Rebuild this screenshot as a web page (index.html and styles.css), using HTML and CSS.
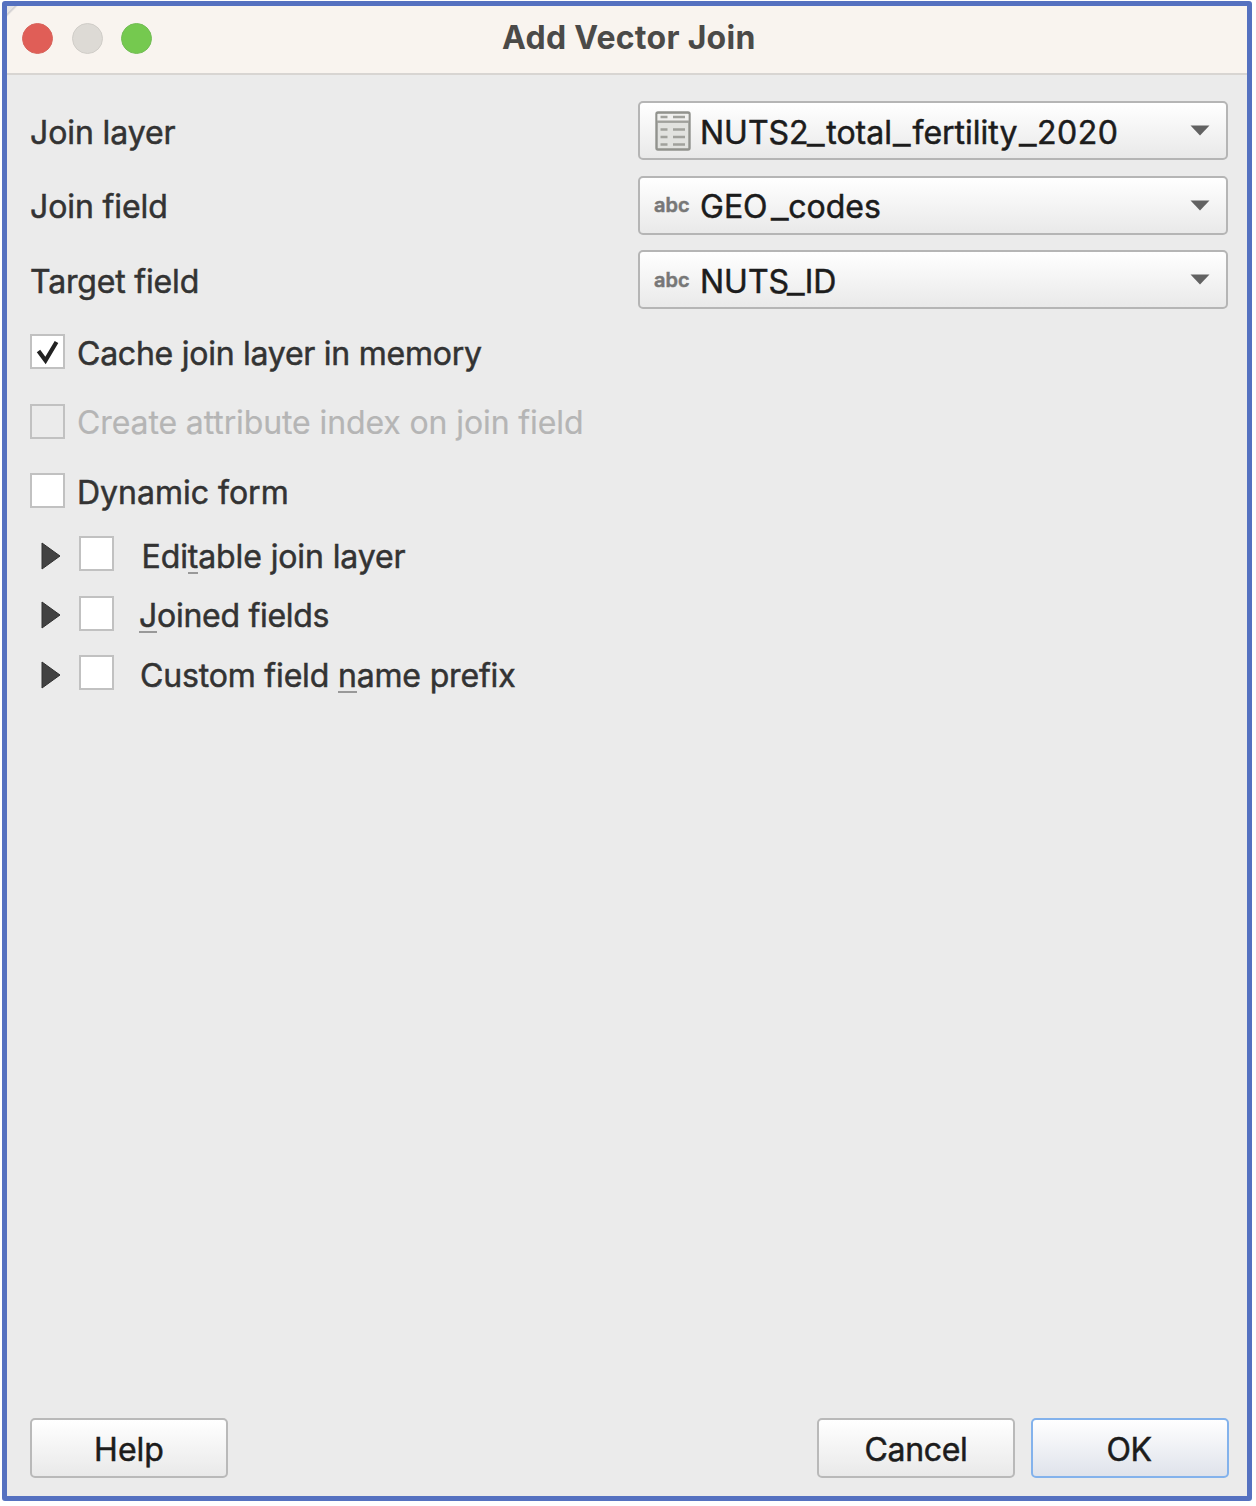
FILE: index.html
```html
<!DOCTYPE html>
<html lang="en">
<head>
<meta charset="utf-8">
<title>Add Vector Join</title>
<link rel="stylesheet" href="styles.css">
</head>
<body>
<main class="dialog">
  <header class="titlebar">
    <div class="lights"><i class="light close"></i><i class="light minimize"></i><i class="light expand"></i></div>
    <h1 class="title">Add Vector Join</h1>
  </header>
  <section class="content">
    <div class="fields">
      <div class="field">
        <span class="label">Join layer</span>
        <div class="combo">
          <svg class="table-icon" width="36" height="40" viewBox="0 0 36 40">
            <rect x="1.500" y="1.500" width="33" height="37" rx="1.500" fill="#e1e2df" stroke="#91928d" stroke-width="2.400"/>
            <path d="M2.500 3h31v7h-31z" fill="#f0f0ee"/>
            <path d="M2 10.700h32" stroke="#a0a19c" stroke-width="2.400"/>
            <path d="M5.500 6h7M18 6h12M5.500 18.500h7M18 18.500h12M5.500 26h7M18 26h12M5.500 33.500h7M18 33.500h12" stroke="#a0a19c" stroke-width="2.400"/>
          </svg>
          <span class="value">NUTS2<span class="bar bar-first">_</span>total<span class="bar bar-second">_</span>fertility<span class="bar bar-third">_</span><span class="year">2020</span></span>
          <svg class="arrow" width="20" height="11" viewBox="0 0 20 11"><path d="M.5 .5h19L10 10.500z" fill="#626262"/></svg>
        </div>
      </div>
      <div class="field">
        <span class="label">Join field</span>
        <div class="combo">
          <span class="abc">abc</span>
          <span class="value">GEO<span class="bar gap">_</span>codes</span>
          <svg class="arrow" width="20" height="11" viewBox="0 0 20 11"><path d="M.5 .5h19L10 10.500z" fill="#626262"/></svg>
        </div>
      </div>
      <div class="field">
        <span class="label target">Target field</span>
        <div class="combo">
          <span class="abc">abc</span>
          <span class="value">NUTS<span class="bar bar-id">_</span>ID</span>
          <svg class="arrow" width="20" height="11" viewBox="0 0 20 11"><path d="M.5 .5h19L10 10.500z" fill="#626262"/></svg>
        </div>
      </div>
    </div>
    <div class="options">
      <div class="option cache"><span class="box"><svg width="35" height="35" viewBox="0 0 35 35"><path d="M8.500 17L15.500 26.500L26.500 8" fill="none" stroke="#222" stroke-width="4.200"/></svg></span><span>Cache join layer in memory</span></div>
      <div class="option disabled"><span class="box"></span><span>Create attribute index on join field</span></div>
      <div class="option"><span class="box"></span><span>Dynamic form</span></div>
    </div>
    <div class="groups">
      <div class="group editable"><svg class="disclosure" width="20" height="28" viewBox="0 0 20 28"><path d="M1 1L19 14L1 27z" fill="#424242" stroke="#303030"/></svg><span class="box"></span><span class="caption">Edi<span class="key">t</span>able join layer</span></div>
      <div class="group joined"><svg class="disclosure" width="20" height="28" viewBox="0 0 20 28"><path d="M1 1L19 14L1 27z" fill="#424242" stroke="#303030"/></svg><span class="box"></span><span class="caption"><span class="key">J</span>oined fields</span></div>
      <div class="group custom"><svg class="disclosure" width="20" height="28" viewBox="0 0 20 28"><path d="M1 1L19 14L1 27z" fill="#424242" stroke="#303030"/></svg><span class="box"></span><span class="caption">Custom field <span class="key">n</span>ame prefix</span></div>
    </div>
    <footer class="buttons">
      <button class="button help">Help</button>
      <button class="button cancel">Cancel</button>
      <button class="button primary">OK</button>
    </footer>
  </section>
</main>
</body>
</html>
```
FILE: styles.css
```css
* { box-sizing: border-box; }
body { margin: 0; padding: 1px 2px; height: 1506px; background: #fff; overflow: hidden; font: 32px/40px Inter, sans-serif; color: #333; white-space: nowrap; -webkit-text-stroke: .5px currentColor; }
.dialog { width: 1250px; height: 1500px; border: 5px solid #5571c0; border-radius: 3px; background: #ebebeb; display: flex; flex-direction: column; }
.titlebar { height: 69px; flex: none; background: linear-gradient(135deg, #e6e4e5 5px, #cfcdcf 6px, #f9f4ef 8px); border-bottom: 2px solid #d8d5d2; display: grid; grid-template-columns: 495px auto 1fr; align-items: center; }
.lights { display: flex; gap: 18.500px; padding-left: 15px; margin-top: -2px; }
.light { width: 31px; height: 31px; border-radius: 50%; }
.close { background: #e05e57; border: 1px solid #d8655d; }
.minimize { background: #dddad5; border: 1px solid #d0cdc8; }
.expand { background: #75c94f; border: 1px solid #74bd56; }
.title { margin: -4px 0 0; font-size: 32px; font-weight: 700; letter-spacing: .28px; color: #4b4a48; -webkit-text-stroke: 0; }
.content { flex: 1; display: flex; flex-direction: column; padding: 26px 18px 18px 23px; }
.fields { display: flex; flex-direction: column; gap: 15.500px; margin-right: 1px; }
.field { display: grid; grid-template-columns: 1fr 590px; height: 59px; align-items: center; }
.label { padding-top: 4px; letter-spacing: -.1px; }
.target { letter-spacing: -.17px; }
.combo { height: 59px; border: 2px solid #b5b5b5; border-radius: 5px; background: linear-gradient(#fff, #e9e9e9); display: grid; grid-template-columns: 45px 1fr 20px; align-items: center; padding: 0 16px 0 15px; color: #1c1c1c; }
.value { padding-top: 4px; }
.bar { display: inline-block; transform: scaleX(1.2); transform-origin: right; }
.bar-first { margin: 0 2px 0 1px; }
.bar-second { margin: 0 2px 0 4px; }
.bar-third { margin: 0 0 0 5px; }
.bar-id { margin-left: 1px; }
.year { letter-spacing: .5px; }
.gap { margin-left: 6px; }
.abc { font-size: 20px; font-weight: 600; line-height: 24px; color: #777; margin-left: -1px; }
.box { width: 35px; height: 35px; flex: none; border: 2px solid #c1c1c1; background: #fff; }
.box svg { display: block; margin: -2px; }
.options { margin-top: 25px; display: flex; flex-direction: column; gap: 34.500px; }
.option { height: 35px; display: flex; align-items: center; gap: 12px; }
.option > span:last-child { padding-top: 4px; }
.cache { letter-spacing: -.25px; }
.disabled { color: #b5b5b5; letter-spacing: -.11px; -webkit-text-stroke-width: .2px; }
.disabled .box { background: transparent; }
.groups { margin-top: 28px; display: flex; flex-direction: column; gap: 24.500px; }
.group { height: 35px; display: flex; align-items: center; padding-left: 10px; }
.disclosure { margin: 4px 18px 0 1px; }
.caption { padding-top: 6px; margin-left: 26px; }
.editable { letter-spacing: -.1px; }
.editable .caption { margin-left: 27.500px; }
.joined { letter-spacing: -.28px; }
.joined .caption { margin-left: 25px; }
.custom { letter-spacing: -.17px; }
.key { box-shadow: 0 2px #999; display: inline-block; height: 35px; line-height: 40px; vertical-align: top; }
.buttons { margin-top: auto; display: flex; gap: 16px; }
.button { width: 198px; height: 60px; border: 2px solid #b9b9b9; border-radius: 5px; background: linear-gradient(#fff, #e9e9e9); font: inherit; color: #1c1c1c; padding: 3px 0 0; -webkit-text-stroke: inherit; }
.help { margin-right: auto; }
.cancel { letter-spacing: -.3px; }
.primary { border-color: #83b2ec; background: linear-gradient(#fff, #dfe3eb); letter-spacing: -.5px; padding-right: 2px; }
```
